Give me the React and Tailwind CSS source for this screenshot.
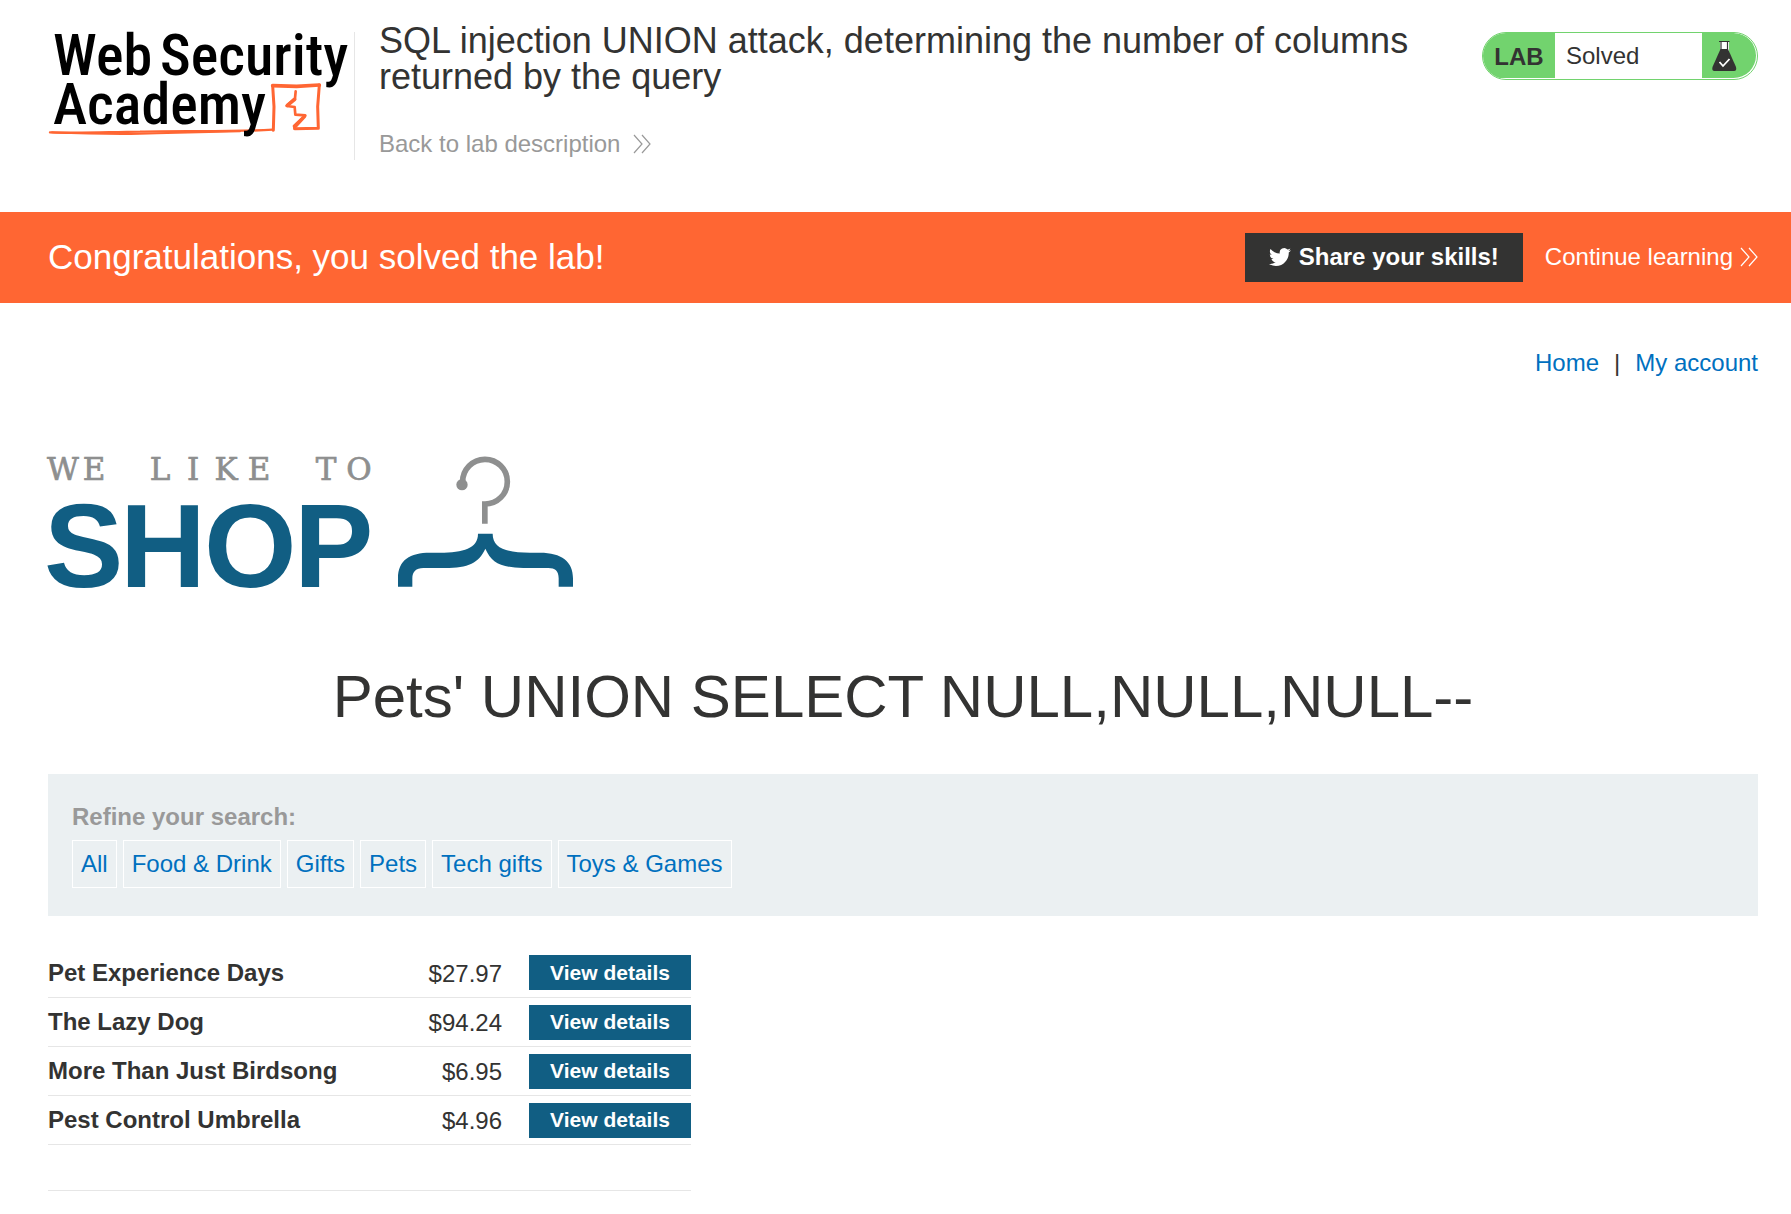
const categories = ["All", "Food & Drink", "Gifts", "Pets", "Tech gifts", "Toys & Games"];

const products = [
  { name: "Pet Experience Days", price: "$27.97" },
  { name: "The Lazy Dog", price: "$94.24" },
  { name: "More Than Just Birdsong", price: "$6.95" },
  { name: "Pest Control Umbrella", price: "$4.96" },
];

function AcademyLogo() {
  return (
    <svg width="306" height="108" viewBox="0 0 306 108" className="overflow-visible" role="img" aria-label="Web Security Academy">
      <g transform="translate(-8 -12) scale(0.33333)" fill="none" stroke="#ff6633" strokeLinejoin="round" strokeLinecap="round">
        <path d="M30 337 C120 341 200 336 300 335 C420 331 560 337 698 329" strokeWidth="7" />
        <path d="M36 337 C150 342 260 344 350 340 L600 334" strokeWidth="6" />
        <path d="M700 331 L702 260 L698 197" strokeWidth="9" />
        <path d="M698 197 L770 199 L838 195" strokeWidth="11" />
        <path d="M838 195 L833 260 L835 325 L764 326" strokeWidth="9" />
        <path d="M764 326 L762 318 L796 286 L766 284 L764 261 L740 258 L765 235 L767 214" strokeWidth="8" />
        <path d="M742 256 L764 238" strokeWidth="11" />
        <path d="M767 318 L794 289" strokeWidth="10" />
      </g>
      <g fill="#000" fontFamily="'Roboto Condensed', Roboto, sans-serif" fontSize="58" fontWeight="500">
        <text x="5" y="43">Web</text>
        <text x="112" y="43">Security</text>
        <text x="5" y="92">Academy</text>
      </g>
    </svg>
  );
}

function ShopLogo() {
  return (
    <svg width="526" height="132" viewBox="0 0 526 132" className="overflow-visible" role="img" aria-label="We like to shop">
      <text
        x="15 46 78 112 145 178 211 245 278 311"
        y="23"
        textAnchor="middle"
        fontFamily="'DejaVu Serif', serif"
        fontSize="31"
        fill="#8e8f8f"
        stroke="#8e8f8f"
        strokeWidth="0.700"
      >
        WE LIKE TO
      </text>
      <text x="-4 72 156 246" y="130" fontFamily="'Liberation Sans', Arial, sans-serif" fontWeight="700" fontSize="119" fill="#115e83">
        SHOP
      </text>
      <g transform="translate(332 -17) scale(0.33333)">
        <path d="M248 130 V126 A67 67 0 1 1 314.500 192 V251" fill="none" stroke="#8e8f8f" strokeWidth="17" />
        <circle cx="246" cy="134" r="17" fill="#8e8f8f" />
        <path
          d="M54 440 V415 C54 360 90 338 150 338 H180 C250 338 294 325 294 281 H338 C338 325 380 338 450 338 H480 C545 338 579 365 579 415 V440 H536 V415 C536 392 525 384 505 384 H430 C360 382 335 368 316 326 C297 368 265 384 195 384 H130 C108 384 97 395 97 415 V440Z"
          fill="#115e83"
        />
      </g>
    </svg>
  );
}

function Chevrons() {
  return (
    <svg width="18" height="20" viewBox="0 0 18 20" fill="none" stroke="currentColor" strokeWidth="1.200" aria-hidden="true">
      <path d="M1 1 L9 10 L1 19 M9 1 L17 10 L9 19" />
    </svg>
  );
}

function Flask() {
  return (
    <svg width="26" height="32" viewBox="0 0 26 32" aria-hidden="true">
      <path d="M9 2 H18 V12 H9Z" fill="#fff" />
      <path d="M8 1.500 H18.500 M10 2 V10 M16.500 2 V10" stroke="#333332" strokeWidth="1.200" fill="none" />
      <path d="M9.500 9 H17 L25 27 Q26 31 23 31 H3.500 Q0.500 31 1.500 27Z" fill="#333332" />
      <path d="M8.500 22 L12 26 L18.500 19" fill="none" stroke="#fff" strokeWidth="1.800" />
    </svg>
  );
}

function Bird() {
  return (
    <svg width="22" height="22" viewBox="0 0 24 24" fill="#fff" aria-hidden="true">
      <path d="M23.953 4.570a10 10 0 01-2.825.775 4.958 4.958 0 002.163-2.723c-.951.555-2.005.959-3.127 1.184a4.920 4.920 0 00-8.384 4.482C7.690 8.095 4.067 6.130 1.640 3.162a4.822 4.822 0 00-.666 2.475c0 1.710.870 3.213 2.188 4.096a4.904 4.904 0 01-2.228-.616v.060a4.923 4.923 0 003.946 4.827 4.996 4.996 0 01-2.212.085 4.936 4.936 0 004.604 3.417 9.867 9.867 0 01-6.102 2.105c-.390 0-.779-.023-1.170-.067a13.995 13.995 0 007.557 2.209c9.053 0 13.998-7.496 13.998-13.985 0-.210 0-.420-.015-.630A9.935 9.935 0 0024 4.590z" />
    </svg>
  );
}

export default function App() {
  return (
    <div className="bg-white font-['Liberation_Sans',Arial,sans-serif] text-2xl text-[#333332]">
      <header className="flex items-start pt-8 pr-[33px] pb-[52px] pl-12">
        <a href="#academy" className="h-32 w-[307px] shrink-0 border-r border-[#e6e6e6]">
          <AcademyLogo />
        </a>
        <div className="-mt-2 ml-6 min-w-0 flex-1 pr-16">
          <h2 className="-mt-px text-[36px] leading-9">
            SQL injection UNION attack, determining the number of columns returned by the query
          </h2>
          <a href="#lab" className="mt-[35px] flex items-center gap-[13px] leading-7 text-[#999999]">
            Back to lab description
            <Chevrons />
          </a>
        </div>
        <div className="flex h-12 w-[276px] shrink-0 overflow-hidden rounded-full border border-[#72d36e] pr-px pb-px">
          <p className="flex w-[72px] items-center justify-center bg-[#72d36e] pt-0.5 font-bold">LAB</p>
          <p className="flex flex-1 items-center pl-[11px]">Solved</p>
          <span className="flex w-[54px] items-center rounded-r-full bg-[#72d36e] pt-px pl-[9px]">
            <Flask />
          </span>
        </div>
      </header>

      <section className="flex items-center bg-[#ff6633] py-[21px] pr-[33px] pl-12 text-white">
        <h3 className="flex-1 pb-0.5 text-[35px] leading-[47px]">Congratulations, you solved the lab!</h3>
        <button type="button" className="flex h-[49px] items-center gap-2 bg-[#333332] px-6 pb-0.5 font-bold">
          <Bird />
          Share your skills!
        </button>
        <a href="#continue" className="ml-[22px] flex items-center gap-[7px] pb-0.5">
          Continue learning
          <Chevrons />
        </a>
      </section>

      <main className="pr-[33px] pl-12">
        <nav className="flex justify-end gap-[15px] pt-11 leading-8">
          <a href="#home" className="text-[#0070bf]">Home</a>
          <span>|</span>
          <a href="#account" className="text-[#0070bf]">My account</a>
        </nav>

        <div className="mt-[78px]">
          <ShopLogo />
        </div>

        <h1 className="mt-[72px] text-center text-[60px] leading-[72px]">Pets' UNION SELECT NULL,NULL,NULL--</h1>

        <section className="mt-[41px] bg-[#ebf0f2] px-6 pt-[27px] pb-7">
          <h2 className="leading-8 font-bold text-[#999999]">Refine your search:</h2>
          <div className="mt-[7px] flex flex-wrap gap-[6px]">
            {categories.map((c) => (
              <a key={c} href="#filter" className="flex h-12 items-center border border-white px-2 text-[#0070bf]">
                {c}
              </a>
            ))}
          </div>
        </section>

        <table className="mt-8 w-[643px]">
          <tbody>
            {products.map((p) => (
              <tr key={p.name} className="h-[49px] border-b border-[#e6e6e6]">
                <th scope="row" className="pt-px text-left font-bold">{p.name}</th>
                <td className="pt-[3px] pr-[27px] text-right">{p.price}</td>
                <td className="w-[162px] pt-px">
                  <a href="#product" className="flex h-[35px] items-center justify-center bg-[#115e83] text-[21px] font-bold text-white">
                    View details
                  </a>
                </td>
              </tr>
            ))}
            <tr className="h-[46px] border-b border-[#e6e6e6]">
              <td colSpan={3} />
            </tr>
          </tbody>
        </table>
      </main>
    </div>
  );
}
